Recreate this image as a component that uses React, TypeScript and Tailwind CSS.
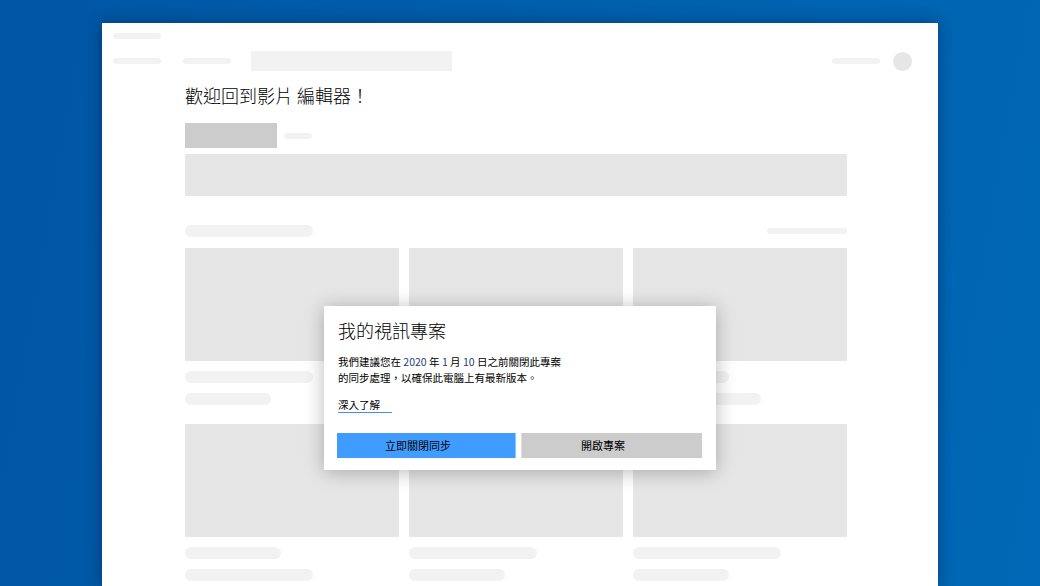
const cjk = "font-['Noto_Sans_CJK_TC','Noto_Sans',sans-serif]";

const cardRows = [
  [
    { a: "w-[128px]", b: "w-[86px]" },
    { a: "w-[128px]", b: "w-[96px]" },
    { a: "w-[96px]", b: "w-[128px]" },
  ],
  [
    { a: "w-[96px]", b: "w-[128px]" },
    { a: "w-[128px]", b: "w-[96px]" },
    { a: "w-[148px]", b: "w-[96px]" },
  ],
];

const Pill = ({ className }: { className: string }) => (
  <div className={`rounded-full bg-[#f2f2f2] ${className}`} />
);

const SyncDialog = () => (
  <div
    className={`absolute left-[222px] top-[283px] w-[392px] h-[164px] bg-white shadow-[0_2px_18px_rgba(0,0,0,0.28)] px-[13px] pt-[11px] flex flex-col ${cjk}`}
  >
    <h2 className="pl-[1px] text-[18px] leading-[26px] font-light text-black">我的視訊專案</h2>
    <p className="mt-[11px] pl-[1px] text-[10.5px] leading-[16px] text-black">
      我們建議您在 <span className="text-[#22407a]">2020</span> 年{" "}
      <span className="text-[#22407a]">1</span> 月{" "}
      <span className="text-[#22407a]">10</span> 日之前關閉此專案
      <br />
      的同步處理，以確保此電腦上有最新版本。
    </p>
    <div className="mt-[4px] pl-[1px]">
      <a className="inline-block w-[54px] border-b border-[#4a90e2] text-[10.5px] leading-[14px] text-black">
        深入了解
      </a>
    </div>
    <div className="mt-auto mb-[12px] flex gap-[5px] pr-[1px]">
      <button className="h-[25px] flex-1 pr-[16px] bg-[#409dff] border-r border-[#8cc4ff] text-[11px] text-black">
        立即關閉同步
      </button>
      <button className="h-[25px] flex-1 pr-[18px] bg-[#cccccc] border-l border-[#e0e0e0] text-[11px] text-black">
        開啟專案
      </button>
    </div>
  </div>
);

export default function App() {
  return (
    <div className="w-[1040px] h-[586px] overflow-hidden bg-[linear-gradient(100deg,#0056a4_0%,#005eab_45%,#0068b6_100%)] pt-[23px] pl-[102px]">
      <div className="relative w-[836px] h-[563px] bg-white shadow-[0_0_14px_rgba(0,20,60,0.45)]">
        {/* header */}
        <div className="pl-[11px] pt-[10px]">
          <Pill className="w-[48px] h-[6px]" />
        </div>
        <div className="mt-[12px] flex items-center h-[20px] pl-[11px] pr-[26px]">
          <Pill className="w-[48px] h-[6px]" />
          <Pill className="ml-[22px] w-[48px] h-[6px]" />
          <div className="ml-[20px] w-[201px] h-[20px] bg-[#f2f2f2]" />
          <div className="flex-1" />
          <Pill className="w-[48px] h-[6px]" />
          <div className="ml-[13px] w-[19px] h-[19px] rounded-full bg-[#e6e6e6]" />
        </div>

        {/* content */}
        <div className="ml-[83px] w-[662px]">
          <h1 className={`mt-[12px] text-[18px] leading-[24px] font-light text-black ${cjk}`}>
            歡迎回到影片 編輯器！
          </h1>
          <div className="mt-[16px] flex items-center gap-[7px]">
            <div className="w-[92px] h-[25px] bg-[#cccccc]" />
            <Pill className="w-[28px] h-[6px]" />
          </div>
          <div className="mt-[6px] h-[42px] bg-[#e6e6e6]" />

          <div className="mt-[29px] flex items-center justify-between">
            <Pill className="w-[128px] h-[12px]" />
            <Pill className="w-[80px] h-[6px]" />
          </div>

          <div className="mt-[11px] flex flex-col gap-[19px]">
            {cardRows.map((row, i) => (
              <div key={i} className="grid grid-cols-3 gap-[10px]">
                {row.map((c, j) => (
                  <div key={j} className="flex flex-col">
                    <div className="h-[113px] bg-[#e6e6e6]" />
                    <Pill className={`mt-[10px] h-[12px] ${c.a}`} />
                    <Pill className={`mt-[10px] h-[12px] ${c.b}`} />
                  </div>
                ))}
              </div>
            ))}
          </div>
        </div>

        <SyncDialog />
      </div>
    </div>
  );
}
